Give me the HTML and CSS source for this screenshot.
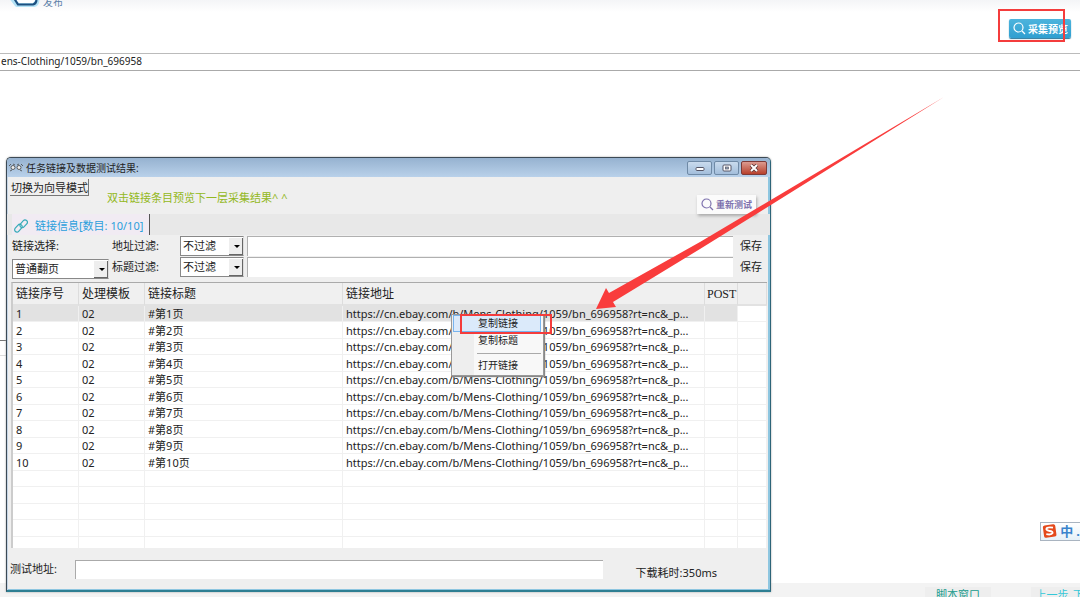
FILE: index.html
```html
<!DOCTYPE html>
<html lang="zh-CN">
<head>
<meta charset="utf-8">
<title>任务链接及数据测试结果</title>
<link rel="stylesheet" href="styles.css">
</head>
<body>
<header class="app-header">
  <div class="brand">
    <svg class="brand-logo" width="34" height="12" viewBox="0 0 34 12" aria-hidden="true">
      <path d="M3 -2L8 4.500H25Q28 4 28 -1" fill="none" stroke="#b4e2f5" stroke-width="5" stroke-linejoin="round"/>
      <path d="M5 -2L9 4.500H24Q27 4 27.500 0" fill="none" stroke="#1d5080" stroke-width="2.200" stroke-linejoin="round"/>
      <path d="M6 -2L10 3H24L27 -1" fill="#fff"/>
    </svg>
    <span class="brand-text">发布</span>
  </div>
  <button class="preview-btn" type="button">
    <svg width="13" height="13" viewBox="0 0 13 13" aria-hidden="true"><circle cx="5.500" cy="5.500" r="4.500"/><path d="M9 9l3 3"/></svg>
    采集预览
  </button>
</header>
<input class="url-input" aria-label="网址" value="ens-Clothing/1059/bn_696958">
<main class="workspace">
  <div class="panel-line"></div>
</main>
<footer class="app-footer">
  <button type="button" class="script-btn">脚本窗口</button>
  <button type="button" class="step-btn">上一步</button>
  <button type="button" class="step-btn next">下</button>
</footer>

<section class="window">
  <div class="titlebar">
    <svg width="14" height="10" viewBox="0 0 14 10" aria-hidden="true"><g fill="#eee" stroke="#444" stroke-width=".8"><circle cx="4" cy="4.500" r="2"/><circle cx="10" cy="4.500" r="2"/><path d="M0 3l2-2M4 1l2 1M8 2l2-1M12 1l2 2M1 8l2-1M11 7l2 1"/></g></svg>
    <h1 class="title">任务链接及数据测试结果:</h1>
    <div class="win-btns">
      <button type="button" class="win-btn" aria-label="最小化"><svg width="10" height="8" viewBox="0 0 10 8"><rect x="1" y="3.500" width="8" height="3" rx="1" fill="#fff" stroke="#556"/></svg></button>
      <button type="button" class="win-btn" aria-label="最大化"><svg width="10" height="8" viewBox="0 0 10 8"><rect x="1" y="1" width="8" height="6" rx="1" fill="#fff" stroke="#556"/><rect x="3.500" y="3" width="3" height="2" fill="#9ab" stroke="#556" stroke-width=".7"/></svg></button>
      <button type="button" class="win-btn close" aria-label="关闭"><svg width="10" height="8" viewBox="0 0 10 8"><path d="M2 1l6 6M8 1L2 7" stroke="#5a3434" stroke-width="3.500"/><path d="M2 1l6 6M8 1L2 7" stroke="#fff" stroke-width="2"/></svg></button>
    </div>
  </div>
  <div class="toolbar">
    <button type="button" class="mode-btn">切换为向导模式</button>
    <p class="hint">双击链接条目预览下一层采集结果^ ^</p>
    <button type="button" class="retest-btn">
      <svg width="13" height="13" viewBox="0 0 13 13" aria-hidden="true"><circle cx="5.500" cy="5.500" r="4.500"/><path d="M9 9l3 3"/></svg>
      重新测试
    </button>
  </div>
  <div class="tabs">
    <button type="button" class="tab">
      <svg width="14" height="14" viewBox="0 0 14 14" aria-hidden="true"><g fill="none" stroke="#35abb8" stroke-width="1.200" transform="rotate(-48 7 7)"><rect x="-.8" y="4.200" width="8.800" height="4.600" rx="2.300"/><rect x="6" y="5.200" width="8.800" height="4.600" rx="2.300"/></g></svg>
      链接信息[数目: 10/10]
    </button>
  </div>
  <div class="filters">
    <div class="link-choice">
      <label for="link-kind">链接选择:</label>
      <span class="combo"><select id="link-kind"><option>普通翻页</option></select></span>
    </div>
    <div class="filter-rows">
      <div class="filter-row">
        <label for="addr">地址过滤:</label>
        <span class="combo"><select id="addr"><option>不过滤</option></select></span>
        <input class="filter-text" aria-label="地址过滤内容">
        <button type="button" class="save-btn">保存</button>
      </div>
      <div class="filter-row">
        <label for="ttl">标题过滤:</label>
        <span class="combo"><select id="ttl"><option>不过滤</option></select></span>
        <input class="filter-text" aria-label="标题过滤内容">
        <button type="button" class="save-btn">保存</button>
      </div>
    </div>
  </div>
  <div class="list">
    <table class="links">
      <colgroup><col class="c-no"><col class="c-tpl"><col class="c-title"><col><col class="c-post"><col class="c-rest"></colgroup>
      <thead><tr><th>链接序号</th><th>处理模板</th><th>链接标题</th><th>链接地址</th><th class="post">POST</th><th></th></tr></thead>
      <tbody>
        <tr class="selected"><td>1</td><td>02</td><td>#第1页</td><td>https://cn.ebay.com/b/Mens-Clothing/1059/bn_696958?rt=nc&amp;_p...</td><td></td><td></td></tr>
        <tr><td>2</td><td>02</td><td>#第2页</td><td>https://cn.ebay.com/b/Mens-Clothing/1059/bn_696958?rt=nc&amp;_p...</td><td></td><td></td></tr>
        <tr><td>3</td><td>02</td><td>#第3页</td><td>https://cn.ebay.com/b/Mens-Clothing/1059/bn_696958?rt=nc&amp;_p...</td><td></td><td></td></tr>
        <tr><td>4</td><td>02</td><td>#第4页</td><td>https://cn.ebay.com/b/Mens-Clothing/1059/bn_696958?rt=nc&amp;_p...</td><td></td><td></td></tr>
        <tr><td>5</td><td>02</td><td>#第5页</td><td>https://cn.ebay.com/b/Mens-Clothing/1059/bn_696958?rt=nc&amp;_p...</td><td></td><td></td></tr>
        <tr><td>6</td><td>02</td><td>#第6页</td><td>https://cn.ebay.com/b/Mens-Clothing/1059/bn_696958?rt=nc&amp;_p...</td><td></td><td></td></tr>
        <tr><td>7</td><td>02</td><td>#第7页</td><td>https://cn.ebay.com/b/Mens-Clothing/1059/bn_696958?rt=nc&amp;_p...</td><td></td><td></td></tr>
        <tr><td>8</td><td>02</td><td>#第8页</td><td>https://cn.ebay.com/b/Mens-Clothing/1059/bn_696958?rt=nc&amp;_p...</td><td></td><td></td></tr>
        <tr><td>9</td><td>02</td><td>#第9页</td><td>https://cn.ebay.com/b/Mens-Clothing/1059/bn_696958?rt=nc&amp;_p...</td><td></td><td></td></tr>
        <tr><td>10</td><td>02</td><td>#第10页</td><td>https://cn.ebay.com/b/Mens-Clothing/1059/bn_696958?rt=nc&amp;_p...</td><td></td><td></td></tr>
        <tr><td></td><td></td><td></td><td></td><td></td><td></td></tr>
        <tr><td></td><td></td><td></td><td></td><td></td><td></td></tr>
        <tr><td></td><td></td><td></td><td></td><td></td><td></td></tr>
        <tr><td></td><td></td><td></td><td></td><td></td><td></td></tr>
        <tr class="last"><td></td><td></td><td></td><td></td><td></td><td></td></tr>
      </tbody>
    </table>
  </div>
  <div class="statusbar">
    <label for="test-url">测试地址:</label>
    <input id="test-url" class="test-input">
    <span class="elapsed">下载耗时:350ms</span>
  </div>
</section>

<div class="context-menu" role="menu">
  <button type="button" role="menuitem" class="active">复制链接</button>
  <button type="button" role="menuitem">复制标题</button>
  <hr>
  <button type="button" role="menuitem">打开链接</button>
</div>

<div class="ime">
  <svg width="16" height="16" viewBox="0 0 16 16" aria-hidden="true"><rect x="1.500" y="1.500" width="13" height="13" rx="2" fill="#e4491b" transform="rotate(-8 8 8)"/><path d="M11.500 4.500Q5 3.500 4.500 6Q5 7.800 8 8Q11.500 8.300 11 10.300Q10 12.300 4.500 11.300" fill="none" stroke="#fff" stroke-width="1.900"/></svg>
  <span>中</span><span class="ime-dot">.</span>
</div>

<div class="mark mark-preview"></div>
<div class="mark mark-copy"></div>
<svg class="arrow" width="350" height="214" viewBox="595 96 350 214" aria-hidden="true"><path d="M596 309L606 288L609 293L700 242L944 97L700 249L613 302L616 307Z" fill="#f93c3c"/></svg>
</body>
</html>
```
FILE: styles.css
```css
* { box-sizing: border-box; }

body {
  margin: 0;
  position: relative;
  display: flex;
  flex-direction: column;
  min-height: 100vh;
  overflow: hidden;
  background: #fff;
  color: #222;
  font: 11px/16px "Noto Sans", "Noto Sans CJK SC", sans-serif;
}

button, input, select {
  font: inherit;
  color: inherit;
  margin: 0;
  padding: 0;
  border: 0;
  border-radius: 0;
  background: none;
}

.app-header {
  display: flex;
  justify-content: space-between;
  height: 53px;
  padding: 0 9px;
  background: linear-gradient(#f4f5f7, #fff 12px);
}
.brand { display: flex; }
.brand-text { margin-top: -6px; color: #5b7fa8; font-size: 10px; }
.preview-btn {
  display: flex;
  align-items: center;
  gap: 2px;
  height: 19px;
  margin-top: 19px;
  padding: 0 3px 0 4px;
  border-radius: 2px;
  background: linear-gradient(#4db4dd, #2f9fd0);
  box-shadow: 0 1px 1px #28779c;
  color: #fff;
  font-size: 10px;
  font-weight: bold;
}
.preview-btn svg, .retest-btn svg { fill: none; stroke: currentColor; stroke-width: 1.2; }

.url-input {
  height: 18px;
  border-top: 1px solid #bbb;
  border-bottom: 1px solid #aaa;
  padding: 0 0 3px 1px;
  font-size: 10px;
}

.workspace { flex: 1; padding-top: 269px; }
.panel-line {
  width: 6px;
  height: 16px;
  border-top: 1px solid #777;
  border-bottom: 1px solid #ddd;
}

.app-footer {
  display: flex;
  justify-content: flex-end;
  height: 14px;
  background: #f3f3f3;
  overflow: hidden;
}
.app-footer button {
  align-self: flex-start;
  margin-top: 4px;
  background: #eee;
}
.script-btn { width: 66px; margin-right: 40px; color: #159a8c; }
.step-btn { width: 42px; color: #35c8d8; }
.app-footer .next { width: 7px; text-align: left; overflow: hidden; }

.window {
  position: absolute;
  left: 6px;
  top: 157px;
  width: 765px;
  display: flex;
  flex-direction: column;
  border: 1px solid #3c4a55;
  border-right-color: #2d6478;
  border-bottom: 2px solid #2f7f93;
  border-radius: 5px 5px 0 0;
  background: #efefef;
  box-shadow: inset 1px 0 #c6d6e6, inset -2px -1px #8ec6e0, 0 0 2px #999;
}
.titlebar {
  display: flex;
  align-items: center;
  gap: 3px;
  height: 19px;
  padding: 0 3px 0 2px;
  border-radius: 4px 4px 0 0;
  background: linear-gradient(#96b2d0, #b9d1ea);
}
.title { flex: 1; margin: 0; font-size: 10px; font-weight: normal; }
.win-btns { display: flex; gap: 2px; }
.win-btn {
  display: grid;
  place-items: center;
  width: 25px;
  height: 14px;
  border: 1px solid #6f8aa6;
  border-radius: 2px;
  background: linear-gradient(#c9dbed, #a3bedb);
}
.win-btn.close {
  width: 26px;
  border-color: #7d3a38;
  background: linear-gradient(#dc9a90, #b8402c);
}

.toolbar {
  display: flex;
  align-items: flex-start;
  height: 37px;
  padding: 2px 14px 0 3px;
}
.mode-btn {
  height: 17px;
  padding: 0 0 0 1px;
  border: solid #777;
  border-width: 0 1px 1px 0;
  line-height: 15px;
}
.hint { flex: 1; margin: 11px 0 0 18px; color: #93b822; }
.retest-btn {
  position: relative;
  display: flex;
  align-items: center;
  gap: 2px;
  height: 19px;
  margin-top: 16px;
  padding: 0 4px;
  background: #fbfbfb;
  box-shadow: 1px 2px 3px #aaa;
  color: #7e72ae;
  font-size: 9px;
  font-weight: bold;
}

.tabs { height: 21px; padding-left: 5px; background: #e8e8e8; }
.tab {
  display: flex;
  align-items: center;
  gap: 7px;
  height: 21px;
  padding: 2px 6px 0 2px;
  border-right: 1px solid #555;
  background: #f1ebf3;
  color: #2b9fdc;
}

.filters { display: flex; gap: 3px; padding: 0 3px 3px 5px; }
.link-choice { display: flex; flex-direction: column; gap: 5px; width: 97px; padding-top: 3px; }
.filter-rows { flex: 1; }
.filter-row { display: flex; align-items: center; height: 21px; }
.filter-row label { width: 68px; }
.filter-row .combo { width: 64px; }
.combo { position: relative; display: flex; height: 20px; }
.combo select {
  flex: 1;
  appearance: none;
  padding: 0 18px 0 2px;
  border: 1px solid #888;
  border-right-color: #ddd;
  background: #fff;
}
.combo::before {
  content: "";
  position: absolute;
  inset: 2px 1px 1px auto;
  width: 13px;
  border: solid #666;
  border-width: 0 1px 1px 0;
  background: #eee;
  pointer-events: none;
}
.combo::after {
  content: "";
  position: absolute;
  right: 4px;
  top: 9px;
  border: 3px solid transparent;
  border-top-color: #000;
  pointer-events: none;
}
.filter-text {
  flex: 1;
  height: 20px;
  margin-left: 3px;
  border: solid #b0b0b0;
  border-width: 1px 0 0 1px;
  background: #fff;
}
.save-btn { width: 34px; padding-left: 2px; }

.list {
  margin: 0 3px 0 4px;
  border-left: 2px solid #ccc;
  border-top: 1px solid #aaa;
  background: #fff;
}
.links {
  width: 100%;
  table-layout: fixed;
  border-collapse: separate;
  border-spacing: 0;
}
.c-no, .c-tpl { width: 66px; }
.c-title { width: 198px; }
.c-post { width: 33px; }
.c-rest { width: 29px; }
.links th {
  height: 23px;
  padding: 0 0 0 3px;
  border-right: 1px solid #ddd;
  border-bottom: 2px solid #e2e2e2;
  background: #f0f0f0;
  font-size: 12px;
  font-weight: normal;
  text-align: left;
}
.links th.post { padding-left: 2px; font-family: "Liberation Serif", serif; }
.links td {
  height: 16px;
  padding: 0 0 0 3px;
  border-right: 1px solid #f0f0f0;
  border-bottom: 1px solid #f0f0f0;
  line-height: 15px;
  white-space: nowrap;
}
.links tr:nth-child(even) td { height: 17px; }
.links tr.last td { height: 11px; border-bottom: 0; }
.links tr.selected td { background: #e2e2e2; }
.links tr.selected td:last-child { background: #fff; }

.statusbar { display: flex; align-items: center; height: 42px; padding: 0 53px 0 3px; }
.statusbar label { width: 65px; }
.test-input {
  flex: 1;
  height: 19px;
  margin-right: 33px;
  border: solid #aaa;
  border-width: 1px 0 0 1px;
  background: #fff;
}
.elapsed { padding-top: 8px; }

.context-menu {
  position: absolute;
  left: 451px;
  top: 314px;
  width: 93px;
  display: flex;
  flex-direction: column;
  padding: 0 2px 1px 1px;
  border: 1px solid #999;
  background: linear-gradient(90deg, #eee 22px, #f8f8f8 22px);
  box-shadow: 1px 1px 1px #888;
}
.context-menu button {
  height: 17px;
  padding-left: 24px;
  border: 1px solid transparent;
  font-size: 10px;
  line-height: 15px;
  text-align: left;
}
.context-menu .active { border-color: #77b4ee; background: #dbeafa; }
.context-menu hr { width: 64px; margin: 4px 0 3px auto; border: 0; border-top: 1px solid #aaa; }

.ime {
  position: absolute;
  right: 0;
  top: 522px;
  display: flex;
  align-items: center;
  gap: 3px;
  width: 40px;
  height: 19px;
  padding: 0 0 2px 1px;
  border: 1px solid #a9b4c0;
  border-right: 0;
  background: linear-gradient(#fff, #e6f1f8);
  color: #3a84cc;
  font-size: 13px;
  font-weight: bold;
  overflow: hidden;
}

.mark { position: absolute; border: 2px solid #f43c3c; pointer-events: none; }
.mark-preview { left: 998px; top: 9px; width: 67px; height: 33px; }
.mark-copy { left: 460px; top: 314px; width: 92px; height: 20px; }
.arrow { position: absolute; left: 595px; top: 96px; pointer-events: none; }
```
